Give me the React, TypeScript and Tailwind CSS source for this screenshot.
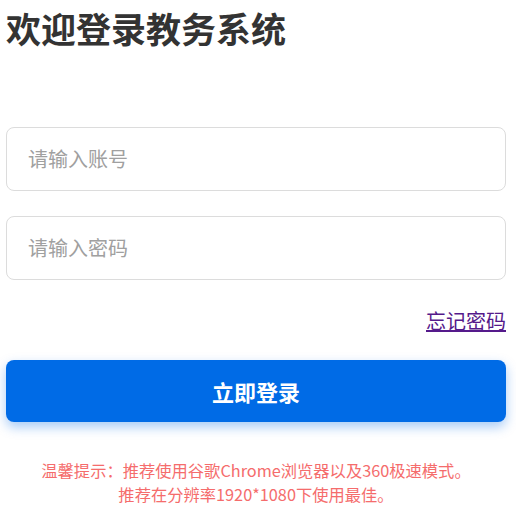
import React from "react";

export default function App() {
  const font = { fontFamily: '"Noto Sans CJK SC", "Noto Sans", sans-serif' };
  return (
    <div className="w-[516px] h-[518px] bg-white overflow-hidden" style={font}>
      <div className="ml-[6px] w-[500px] flex flex-col">
        <h1 className="text-[35px] leading-[50px] font-bold text-[#333] mt-[3px]">欢迎登录教务系统</h1>
        <div className="mt-[74px] h-[64px] rounded-[8px] border border-[#dcdcdc] flex items-center pl-[21px]">
          <input
            className="w-full outline-none text-[20px] text-[#333] placeholder:text-[#a0a0a0] bg-transparent"
            placeholder="请输入账号"
          />
        </div>
        <div className="mt-[25px] h-[64px] rounded-[8px] border border-[#dcdcdc] flex items-center pl-[21px]">
          <input
            type="password"
            className="w-full outline-none text-[20px] text-[#333] placeholder:text-[#a0a0a0] bg-transparent"
            placeholder="请输入密码"
          />
        </div>
        <div className="mt-[26px] flex justify-end">
          <a href="#" className="text-[20px] leading-[30px] text-[#551a8b] underline">忘记密码</a>
        </div>
        <button className="mt-[24px] h-[62px] rounded-[8px] bg-[#006be6] text-white text-[22px] font-bold shadow-[0_5px_12px_rgba(0,107,230,0.35)]">
          立即登录
        </button>
        <div className="mt-[36px] text-center text-[16.3px] leading-[24px] text-[#f56c6c]">
          <p>温馨提示：推荐使用谷歌Chrome浏览器以及360极速模式。</p>
          <p>推荐在分辨率1920*1080下使用最佳。</p>
        </div>
      </div>
    </div>
  );
}
